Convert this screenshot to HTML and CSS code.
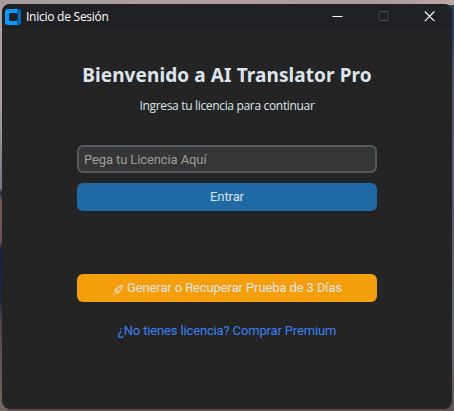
FILE: index.html
```
<!DOCTYPE html>
<html lang="es">
<head>
<meta charset="utf-8">
<title>Inicio de Sesión</title>
<link rel="stylesheet" href="styles.css">
</head>
<body>
<div class="window">
  <header class="titlebar">
    <svg class="app-icon" width="16" height="16" viewBox="0 0 16 16">
      <path fill="#0a99fc" d="M3 0h9v16H3a3 3 0 0 1-3-3V3a3 3 0 0 1 3-3z"/>
      <path fill="#0869b8" d="M12 0h1a3 3 0 0 1 3 3v10a3 3 0 0 1-3 3h-1z"/>
      <rect x="4" y="4" width="8.500" height="8" rx="1.5" fill="#202124"/>
    </svg>
    <span class="caption">Inicio de Sesión</span>
    <div class="controls">
      <svg width="11" height="11" viewBox="0 0 11 11"><path d="M.5 5.5h10" stroke="#fff"/></svg>
      <svg width="11" height="11" viewBox="0 0 11 11"><rect x="1" y=".5" width="9" height="9" rx=".7" fill="none" stroke="#4c4d50"/></svg>
      <svg width="11" height="11" viewBox="0 0 11 11"><path d="M.8.5l9.6 9.6M10.4.5L.8 10.1" stroke="#fff" stroke-width="1.1"/></svg>
    </div>
  </header>
  <main class="content">
    <h1>Bienvenido a AI Translator Pro</h1>
    <p class="subtitle">Ingresa tu licencia para continuar</p>
    <input class="license" type="text" placeholder="Pega tu Licencia Aquí">
    <button class="button enter">Entrar</button>
    <button class="button trial">
      <svg class="rocket" width="12" height="12" viewBox="0 0 12 12" fill="none" stroke="#e4e1d8">
        <path fill="#e4e1d8" fill-opacity=".35" d="M3 7.500C4 4 7 1.500 10.500 1.500c0 3.500-2.500 6.200-6 7.500z"/>
        <circle cx="7.200" cy="4.800" r=".9" fill="#f59e0b" stroke="none"/>
        <path d="M4 5L2 6.500M7 8l-1.500 2.300M3 8.500l-2 2.500"/>
      </svg>
      <span>Generar o Recuperar Prueba de 3 Días</span>
    </button>
    <a class="buy">¿No tienes licencia? Comprar Premium</a>
  </main>
</div>
</body>
</html>
```
FILE: styles.css
```
* { box-sizing: border-box; }
body {
  margin: 0;
  width: 454px;
  height: 411px;
  padding: 4px 2px 2px;
  overflow: hidden;
  background:
    linear-gradient(90deg, #a69a9b, #b1a2a0 50%, #a99a9d 82%, #b9aaa6) top / 100% 5px no-repeat,
    linear-gradient(#273e65 0 30px, #46536f 80px, #686b7c 350px, #625459) right / 3px 100% no-repeat,
    linear-gradient(#aaa0a1 0 100px, #777783 188px, #222d3c 193px, #795e54 202px, #66545a 240px, #17223f 250px, #202641 300px, #503f47 320px, #776761) left / 8px 100% no-repeat,
    #5d5051;
}
.window {
  height: 405px;
  border-radius: 8px;
  overflow: hidden;
  background: #242424;
}
.titlebar {
  display: flex;
  align-items: center;
  height: 25px;
  padding: 0 17px 0 3px;
  background: #202124;
}
.app-icon { flex: none; }
.caption {
  margin-left: 5px;
  color: #fff;
  font: 12px/24px "Open Sans", "Noto Sans", sans-serif;
  letter-spacing: -0.25px;
}
.controls {
  display: flex;
  gap: 35px;
  margin-left: auto;
}
.content {
  display: flex;
  flex-direction: column;
  align-items: center;
}
h1 {
  margin: 32px 0 0;
  color: #dce4ee;
  font: bold 19px/28px "Noto Sans", "Open Sans", sans-serif;
  letter-spacing: 0.1px;
  white-space: nowrap;
}
.subtitle {
  margin: 8px 0 0;
  color: #dce4ee;
  font: 12px/18px "Open Sans", "Noto Sans", sans-serif;
  letter-spacing: -0.33px;
  white-space: nowrap;
}
.license, .button {
  width: 300px;
  height: 28px;
  padding: 0;
  border: 0;
  border-radius: 6px;
  font: 13px/28px Roboto, sans-serif;
  letter-spacing: -0.11px;
}
.license {
  margin-top: 30px;
  padding: 0 5px;
  border: 2px solid #565b5e;
  background: #343638;
  color: #dce4ee;
  line-height: 24px;
}
.license::placeholder { color: #9e9e95; opacity: 1; }
.button {
  display: flex;
  align-items: center;
  justify-content: center;
  color: #dce4ee;
}
.enter {
  margin-top: 10px;
  background: #1f6aa5;
}
.trial {
  margin-top: 63px;
  background: #f59e0b;
  gap: 3px;
}
.rocket { margin-top: 3px; }
.buy {
  margin-top: 15px;
  color: #3b82f6;
  font: 13px/28px Roboto, sans-serif;
  letter-spacing: -0.15px;
}
```
